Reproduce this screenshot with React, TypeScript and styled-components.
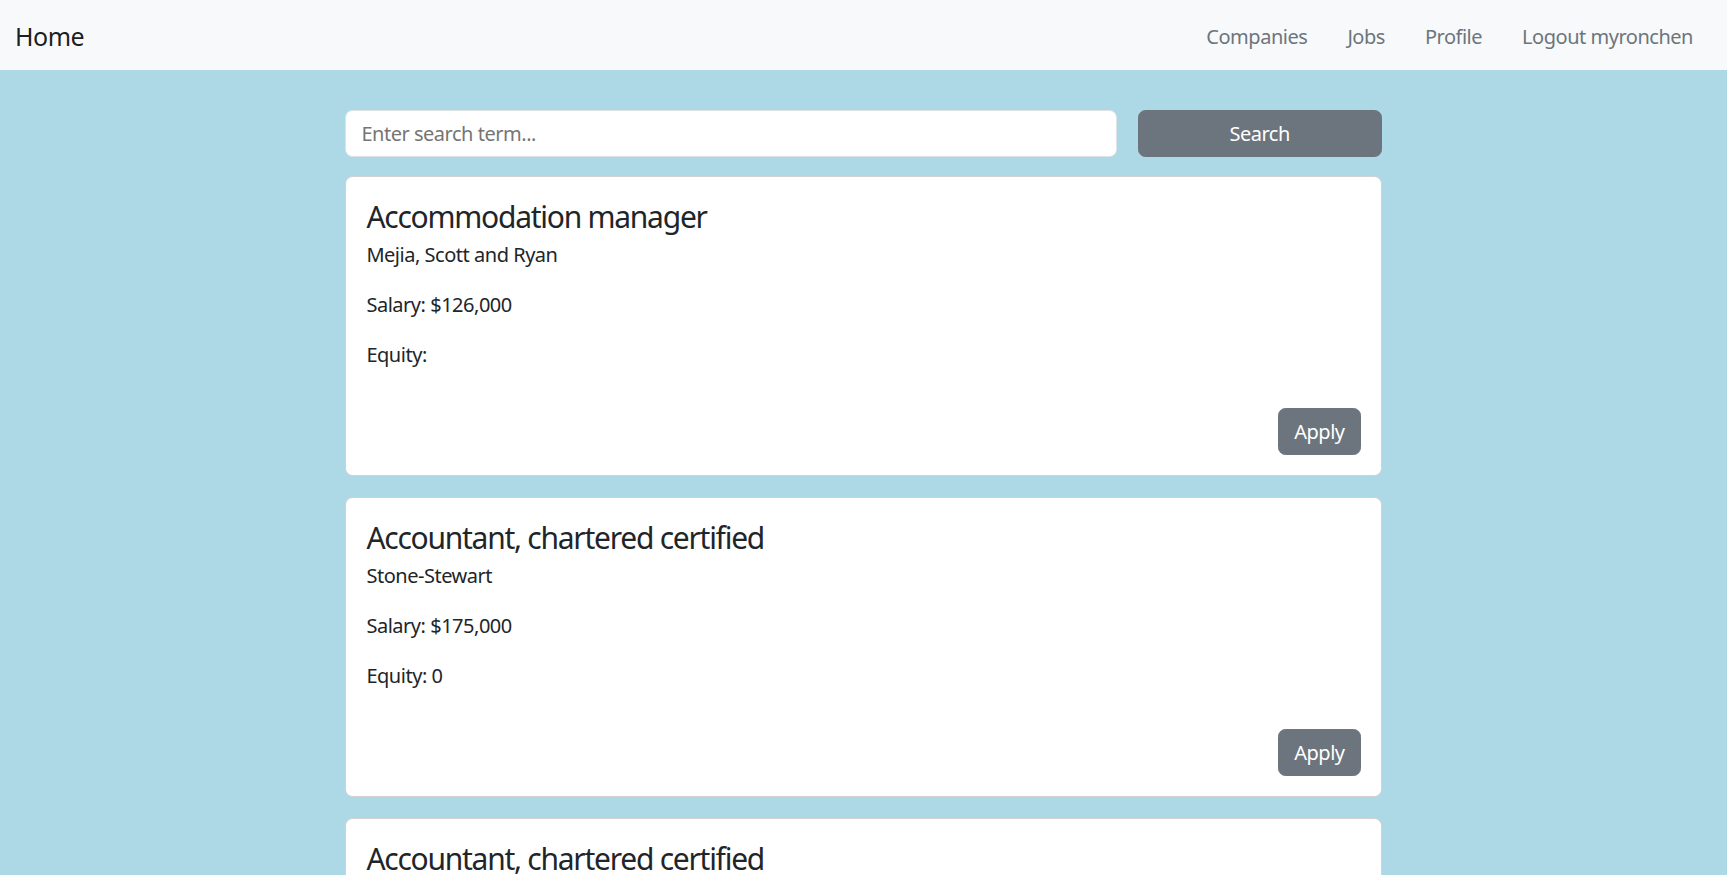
import * as React from "react";
import styled, {createGlobalStyle} from "styled-components";

const GlobalStyle = createGlobalStyle`
  html, body {
    margin: 0;
    padding: 0;
  }

  body {
    background: lightblue;
    font-family: "Noto Sans", "Open Sans", sans-serif;
    letter-spacing: -0.03em;
    color: #212529;
  }

  * {
    box-sizing: border-box;
  }
`;

const NavBar = styled.nav`
  height: 70px;
  background: #f8f9fa;
  display: flex;
  flex-direction: row;
  align-items: center;
  padding: 2px 24px 0 15px;
`;

const Brand = styled.a`
  font-size: 25px;
  color: rgba(0, 0, 0, 0.9);
  text-decoration: none;
`;

const NavLinks = styled.div`
  margin-left: auto;
  display: flex;
  flex-direction: row;
  gap: 20px;
`;

const NavLink = styled.a`
  font-size: 20px;
  padding: 10px;
  color: #6c757d;
  text-decoration: none;

  :hover {
    color: #495057;
  }
`;

const Main = styled.main`
  width: 60%;
  margin: 0 auto;
  padding-top: 40px;
`;

const SearchForm = styled.form`
  display: flex;
  flex-direction: row;
  gap: 21px;
  margin-bottom: 19px;
`;

const SearchInput = styled.input`
  flex: 1;
  height: 47px;
  padding: 0 15px;
  font-family: inherit;
  font-size: 20px;
  letter-spacing: inherit;
  color: #212529;
  background: #fff;
  border: 1px solid #dee2e6;
  border-radius: 7.5px;
  outline: none;

  ::placeholder {
    color: rgba(33, 37, 41, 0.75);
  }
`;

const Button = styled.button<{ $wide?: boolean }>`
  height: 47px;
  width: ${p => p.$wide ? '244px' : 'auto'};
  padding: 0 15px;
  font-family: inherit;
  font-size: 20px;
  letter-spacing: inherit;
  line-height: 30px;
  color: #fff;
  background: #6c757d;
  border: 1px solid #6c757d;
  border-radius: 7.5px;
  cursor: pointer;
`;

const CardList = styled.div`
  display: flex;
  flex-direction: column;
  gap: 21px;
`;

const Card = styled.div`
  background: #fff;
  border: 1px solid rgba(0, 0, 0, 0.175);
  border-radius: 7.5px;
  padding: 22px 20px 20px;
  display: flex;
  flex-direction: column;
`;

const CardTitle = styled.h4`
  margin: 0 0 5px;
  font-size: 30px;
  line-height: 36px;
  font-weight: 400;
  letter-spacing: -0.042em;
`;

const CardText = styled.p`
  margin: 0 0 20px;
  font-size: 20px;
  line-height: 30px;
`;

const ApplyRow = styled.div`
  display: flex;
  justify-content: flex-end;
  margin-top: 18px;
`;

interface Job {
    title: string
    company: string
    salary: number | null
    equity: string | null
}

const jobs: Job[] = [
    {title: "Accommodation manager", company: "Mejia, Scott and Ryan", salary: 126000, equity: null},
    {title: "Accountant, chartered certified", company: "Stone-Stewart", salary: 175000, equity: "0"},
    {title: "Accountant, chartered certified", company: "Owen-Newton", salary: 99000, equity: "0.087"},
    {title: "Accounting technician", company: "Watson-Davis", salary: 84000, equity: "0"},
];

const JobCard = (props: { job: Job }) => {
    const it = props.job;
    return <Card>
        <CardTitle>{it.title}</CardTitle>
        <CardText>{it.company}</CardText>
        <CardText>Salary: {it.salary !== null ? `$${it.salary.toLocaleString("en-US")}` : ""}</CardText>
        <CardText>Equity: {it.equity ?? ""}</CardText>
        <ApplyRow>
            <Button type="button">Apply</Button>
        </ApplyRow>
    </Card>;
};

export default function App() {
    return <>
        <GlobalStyle/>
        <NavBar>
            <Brand href="#">Home</Brand>
            <NavLinks>
                <NavLink href="#">Companies</NavLink>
                <NavLink href="#">Jobs</NavLink>
                <NavLink href="#">Profile</NavLink>
                <NavLink href="#">Logout myronchen</NavLink>
            </NavLinks>
        </NavBar>
        <Main>
            <SearchForm onSubmit={e => e.preventDefault()}>
                <SearchInput placeholder="Enter search term..."/>
                <Button type="submit" $wide>Search</Button>
            </SearchForm>
            <CardList>
                {jobs.map((j, k) => <JobCard key={k} job={j}/>)}
            </CardList>
        </Main>
    </>;
}
